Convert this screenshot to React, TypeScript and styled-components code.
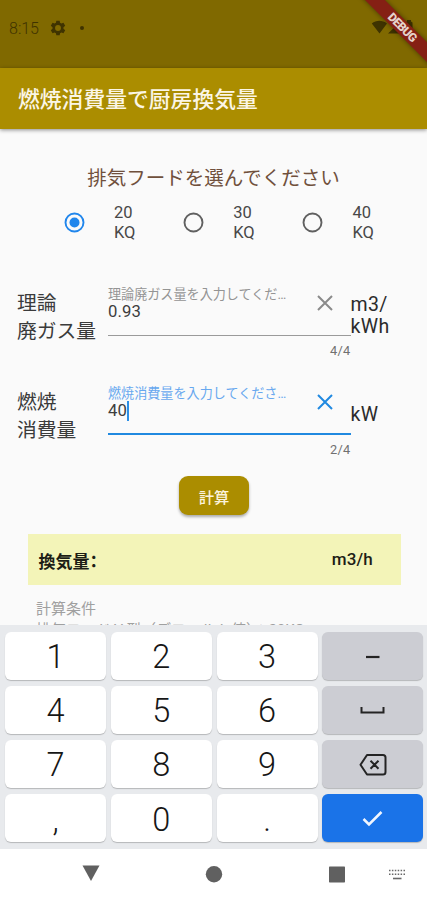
import React from "react";
import styled, { createGlobalStyle } from "styled-components";

const GlobalStyle = createGlobalStyle`
  * { box-sizing: border-box; }
  body {
    margin: 0;
    font-family: Roboto, "Noto Sans CJK JP", sans-serif;
    color: #333;
    background: #fafafa;
  }
`;

const Screen = styled.div`
  display: flex;
  flex-direction: column;
  width: 427px;
  height: 900px;
  overflow: hidden;
  position: relative;
  background: #fafafa;
`;

const StatusBar = styled.div`
  height: 68px;
  flex: none;
  display: flex;
  justify-content: space-between;
  padding: 19px 8px 0 9px;
  background: #806900;
  color: #3f3300;
`;

const StatusGroup = styled.div<{ $gap: number }>`
  display: flex;
  align-items: center;
  gap: ${(p) => p.$gap}px;
  height: 17px;
`;

const Clock = styled.span`
  font-size: 16px;
  font-weight: 300;
  width: 30px;
  margin-right: 1px;
  padding-top: 1px;
  white-space: nowrap;
`;

const Dot = styled.span`
  width: 4px;
  height: 4px;
  margin-left: 4px;
  border-radius: 50%;
  background: currentColor;
`;

const Ribbon = styled.div`
  position: absolute;
  top: 19px;
  left: 351px;
  width: 100px;
  height: 13.5px;
  transform: rotate(45deg);
  background: #852014;
  box-shadow: 0 0 5px rgba(0, 0, 0, 0.45);
  color: #e5d3cc;
  font-size: 12px;
  font-weight: 900;
  line-height: 14px;
  letter-spacing: -0.6px;
  padding-left: 4px;
  text-align: center;
`;

const AppBar = styled.header`
  height: 60.5px;
  flex: none;
  display: flex;
  align-items: center;
  padding: 4px 18px 0;
  background: #ab8d00;
  box-shadow: 0 1px 4px rgba(0, 0, 0, 0.45);
  z-index: 1;
`;

const Title = styled.h1`
  margin: 0;
  font-size: 21.8px;
  line-height: 30px;
  font-weight: 500;
  color: #fbf6e6;
`;

const Content = styled.main`
  flex: 1;
  min-height: 0;
  overflow: hidden;
  padding-top: 36.5px;
`;

const Prompt = styled.div`
  height: 28px;
  line-height: 28px;
  text-align: center;
  font-size: 19.5px;
  color: #70503c;
`;

const Options = styled.div`
  display: flex;
  padding-left: 64px;
  height: 58px;
`;

const Option = styled.label`
  width: 119.2px;
  display: flex;
  align-items: center;
  gap: 29px;
  font-size: 16.5px;
  line-height: 20.5px;
  letter-spacing: 0;
  color: #484848;
`;

const OptionText = styled.span`
  width: 26px;
  padding-top: 2px;
`;

const Fields = styled.div`
  padding: 32.5px 18px 0 17px;
`;

const FieldRow = styled.div`
  height: 99px;
  display: grid;
  grid-template-columns: 91px 242.5px 1fr;
  align-items: start;
`;

const FieldName = styled.div`
  padding-top: 6px;
  font-size: 19.8px;
  line-height: 28px;
  color: #3b3b3b;
  white-space: pre;
`;

const Input = styled.div<{ $active?: boolean }>`
  display: grid;
  grid-template-columns: 1fr 52px;
  grid-template-rows: 17px 35.5px 30px;
  color: ${(p) => (p.$active ? "#2089e0" : "#8a8a8a")};
  height: 82px;
`;

const Hint = styled.div<{ $active?: boolean }>`
  grid-column: 1;
  margin-top: 3.5px;
  font-size: 13.1px;
  line-height: 16px;
  white-space: nowrap;
  color: ${(p) => (p.$active ? "#68a8ef" : "#949494")};
`;

const Value = styled.div<{ $active?: boolean }>`
  grid-column: 1 / 3;
  grid-row: 2;
  display: flex;
  align-items: flex-start;
  padding-top: 1px;
  line-height: 20px;
  font-size: 16.7px;
  letter-spacing: 0.15px;
  color: #3d3d3d;
  border-bottom: ${(p) => (p.$active ? "2px solid #2089e0" : "1px solid #9a9a9a")};
`;

const Caret = styled.span`
  width: 2px;
  height: 20px;
  margin-left: -0.5px;
  background: #2c8fe6;
`;

const Clear = styled.div`
  grid-column: 2;
  grid-row: 1 / 3;
  display: flex;
  justify-content: center;
  padding-top: 11.5px;
`;

const Counter = styled.div`
  grid-column: 1 / 3;
  grid-row: 3;
  padding-top: 6px;
  text-align: right;
  font-size: 12.8px;
  line-height: 18px;
  letter-spacing: 0.3px;
  color: #707070;
`;

const Unit = styled.div<{ $single?: boolean }>`
  padding-top: ${(p) => (p.$single ? 21 : 10)}px;
  font-size: 19.5px;
  line-height: 22.8px;
  letter-spacing: 0.4px;
  color: #2b2b2b;
  white-space: pre;
`;

const Calculate = styled.button`
  display: block;
  width: 70px;
  height: 39px;
  margin: -5.5px 0 0 179px;
  padding: 0;
  border: 0;
  border-radius: 9px;
  background: #ab8d00;
  box-shadow: 0 2px 3px rgba(0, 0, 0, 0.32);
  color: #fbf2dc;
  font: 500 15.3px Roboto, "Noto Sans CJK JP", sans-serif;
`;

const Result = styled.div`
  display: flex;
  align-items: center;
  justify-content: space-between;
  width: 373px;
  height: 51px;
  margin: 19px 0 0 28px;
  padding: 0 28px 0 10.5px;
  background: #f3f4b8;
  color: #1d1d16;
  font-size: 17px;
`;

const ResultName = styled.span`
  font-weight: 700;
  padding-top: 1px;
`;

/* Half-width alternate keeps the full-width colon close to its label. */
const Colon = styled.span`
  font-feature-settings: "halt";
`;

const ResultUnit = styled.span`
  font-weight: 500;
  letter-spacing: 0.2px;
  padding-bottom: 2px;
`;

const Notes = styled.div`
  padding: 14px 0 0 36px;
  font-size: 15px;
  line-height: 21px;
  color: #a0a0a0;
  white-space: nowrap;
`;

const Keyboard = styled.div`
  flex: none;
  height: 224px;
  display: grid;
  grid-template-columns: repeat(4, 101px);
  grid-template-rows: repeat(4, 47.5px);
  column-gap: 4.8px;
  row-gap: 6.6px;
  padding: 7px 0 0 5px;
  background: #e8eaed;
`;

const keyColors = {
  number: { bg: "#fff", ink: "#161616" },
  action: { bg: "#cccdd3", ink: "#242424" },
  enter: { bg: "#1a73e8", ink: "#f1f6ff" },
};

const Key = styled.div<{ $kind: keyof typeof keyColors }>`
  display: flex;
  align-items: center;
  justify-content: center;
  border-radius: 6px;
  background: ${(p) => keyColors[p.$kind].bg};
  color: ${(p) => keyColors[p.$kind].ink};
  box-shadow: 0 1px 1px rgba(0, 0, 0, 0.22);
  font-size: 32.5px;
  font-weight: 350;
  line-height: 40px;
  padding-top: 3px;
`;

const NavBar = styled.nav`
  flex: none;
  height: 51px;
  display: grid;
  grid-template-columns: 182px 64px 182px;
  justify-content: start;
  background: #fff;
`;

const NavSlot = styled.div<{ $left: number }>`
  display: flex;
  align-items: flex-start;
  padding: 15px 0 0 ${(p) => p.$left}px;
  gap: 43px;
`;

const Radio = ({ on }: { on?: boolean }) => (
  <svg width="21" height="21" viewBox="0 0 21 21">
    <circle cx="10.5" cy="10.5" r="9" fill="none" stroke={on ? "#2086ec" : "#606060"} strokeWidth="1.9" />
    {on && <circle cx="10.5" cy="10.5" r="5" fill="#2086ec" />}
  </svg>
);

const Cross = () => (
  <svg width="16" height="16" viewBox="0 0 16 16" fill="none" stroke="currentColor" strokeWidth="2">
    <path d="M1 1l14 14M15 1L1 15" />
  </svg>
);

const Gear = () => (
  <svg width="16" height="16" viewBox="0 0 24 24" fill="currentColor">
    <path
      fillRule="evenodd"
      d="M9.5 1h5l.6 3.3 2 1.1L20.200 4.200l2.600 4.500-2.600 2.200v2.200l2.600 2.200-2.600 4.500-3.100-1.200-2 1.100-.6 3.300h-5l-.6-3.300-2-1.100-3.100 1.200-2.600-4.500 2.600-2.200v-2.200L1.200 8.700l2.600-4.500 3.100 1.200 2-1.100zM12 7.600a4.400 4.400 0 100 8.800 4.400 4.400 0 000-8.800z"
    />
  </svg>
);

const StatusIcons = () => (
  <svg width="48" height="17" viewBox="0 0 48 17" fill="currentColor">
    <path d="M.8 4.500C5 .700 11.500 .700 16 4.500L8.500 14.500zM17 14.500L30 2v12.500zM34.500 3.500l1.500-1v-1.500h4v1.500l1.500 1V15h-7z" />
  </svg>
);

const Space = () => (
  <svg width="26" height="10" viewBox="0 0 26 10" fill="none" stroke="currentColor" strokeWidth="2">
    <path d="M1.500 1v5.500h22V1" />
  </svg>
);

const Backspace = () => (
  <svg width="28" height="24" viewBox="0 0 28 24" fill="none" stroke="currentColor" strokeWidth="2" strokeLinejoin="round">
    <path d="M8 2h16q2.500 0 2.500 2.500v14.500q0 2.500-2.500 2.500H8l-6.500-9.700zM11.500 7.700l8 8M19.500 7.700l-8 8" />
  </svg>
);

const Check = () => (
  <svg width="22" height="18" viewBox="0 0 22 18" fill="none" stroke="currentColor" strokeWidth="2.500">
    <path d="M1.500 8l5.500 5.500L19.500 1" />
  </svg>
);

const Minus = () => (
  <svg width="14" height="4" viewBox="0 0 14 4">
    <path d="M0 2h13.500" stroke="currentColor" strokeWidth="2.200" />
  </svg>
);

const BackIcon = () => (
  <svg width="18" height="18" viewBox="0 0 18 18" fill="#606060">
    <path d="M.5 1.500h17L9 17z" />
  </svg>
);

const HomeIcon = () => (
  <svg width="18" height="20" viewBox="0 0 18 20" fill="#606060">
    <circle cx="9" cy="10.300" r="8.200" />
  </svg>
);

const RecentIcon = () => (
  <svg width="16" height="20" viewBox="0 0 16 20" fill="#606060">
    <rect y="2.500" width="16" height="16" rx=".7" />
  </svg>
);

const KeyboardIcon = () => (
  <svg width="18" height="20" viewBox="0 0 18 20" fill="none" stroke="#686868" strokeWidth="1.600">
    <path d="M1 6.500h16M1 10.200h16" strokeDasharray="1.500 1.400" />
    <path d="M5 14.500h8.500" />
  </svg>
);

const options = ["20", "30", "40"];

const fields = [
  { name: "理論\n廃ガス量", hint: "理論廃ガス量を入力してくだ…", value: "0.93", count: "4/4", unit: "m3/\nkWh", active: false },
  { name: "燃焼\n消費量", hint: "燃焼消費量を入力してくださ…", value: "40", count: "2/4", unit: "kW", active: true },
];

const keys: { kind: keyof typeof keyColors; face: React.ReactNode }[] = [
  { kind: "number", face: "1" },
  { kind: "number", face: "2" },
  { kind: "number", face: "3" },
  { kind: "action", face: <Minus /> },
  { kind: "number", face: "4" },
  { kind: "number", face: "5" },
  { kind: "number", face: "6" },
  { kind: "action", face: <Space /> },
  { kind: "number", face: "7" },
  { kind: "number", face: "8" },
  { kind: "number", face: "9" },
  { kind: "action", face: <Backspace /> },
  { kind: "number", face: "," },
  { kind: "number", face: "0" },
  { kind: "number", face: "." },
  { kind: "enter", face: <Check /> },
];

export default function App() {
  return (
    <Screen>
      <GlobalStyle />
      <StatusBar>
        <StatusGroup $gap={10}>
          <Clock>8:15</Clock>
          <Gear />
          <Dot />
        </StatusGroup>
        <StatusGroup $gap={0}>
          <StatusIcons />
        </StatusGroup>
      </StatusBar>
      <AppBar>
        <Title>燃焼消費量で厨房換気量</Title>
      </AppBar>
      <Content>
        <Prompt>排気フードを選んでください</Prompt>
        <Options>
          {options.map((o, i) => (
            <Option key={o}>
              <Radio on={i === 0} />
              <OptionText>{o} KQ</OptionText>
            </Option>
          ))}
        </Options>
        <Fields>
          {fields.map((f) => (
            <FieldRow key={f.name}>
              <FieldName>{f.name}</FieldName>
              <Input $active={f.active}>
                <Hint $active={f.active}>{f.hint}</Hint>
                <Value $active={f.active}>
                  {f.value}
                  {f.active && <Caret />}
                </Value>
                <Clear>
                  <Cross />
                </Clear>
                <Counter>{f.count}</Counter>
              </Input>
              <Unit $single={f.active}>{f.unit}</Unit>
            </FieldRow>
          ))}
        </Fields>
        <Calculate>計算</Calculate>
        <Result>
          <ResultName>
            換気量<Colon>：</Colon>
          </ResultName>
          <ResultUnit>m3/h</ResultUnit>
        </Result>
        <Notes>
          計算条件
          <br />
          排気フードⅤ型（デフォルト値）：20KQ
        </Notes>
      </Content>
      <Keyboard>
        {keys.map((k, i) => (
          <Key key={i} $kind={k.kind}>
            {k.face}
          </Key>
        ))}
      </Keyboard>
      <NavBar>
        <NavSlot $left={82}>
          <BackIcon />
        </NavSlot>
        <NavSlot $left={23}>
          <HomeIcon />
        </NavSlot>
        <NavSlot $left={83}>
          <RecentIcon />
          <KeyboardIcon />
        </NavSlot>
      </NavBar>
      <Ribbon>DEBUG</Ribbon>
    </Screen>
  );
}
